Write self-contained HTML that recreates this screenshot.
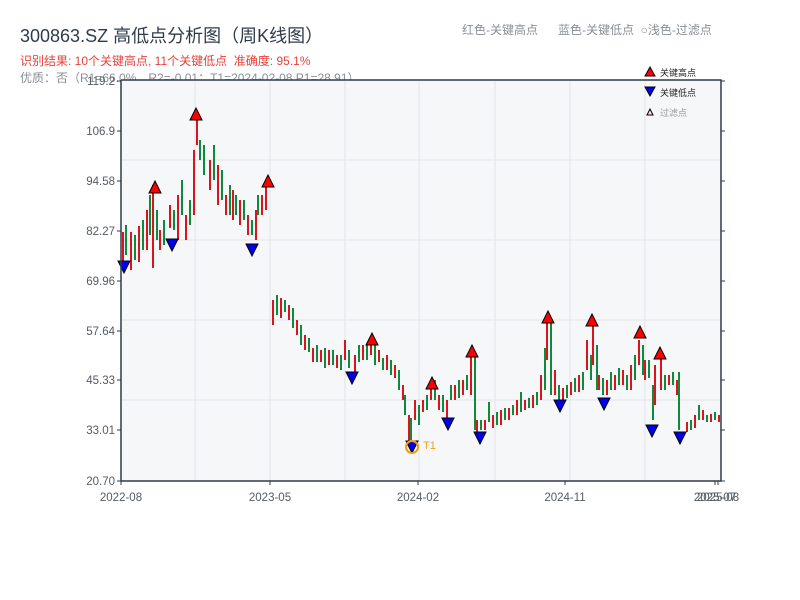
<!DOCTYPE html>
<html><head><meta charset="utf-8"><style>
body{margin:0;width:800px;height:600px;background:#fff;font-family:"Liberation Sans","Noto Sans CJK SC",sans-serif;overflow:hidden;position:relative}
.t{position:absolute;white-space:nowrap}
svg text{font-family:"Liberation Sans","Noto Sans CJK SC",sans-serif}
</style></head><body>
<div class="t" style="left:20px;top:22px;font-size:18px;color:#2f3b4a">300863.SZ 高低点分析图（周K线图）</div>
<div class="t" style="left:20px;top:52px;font-size:12px;color:#e8413a">识别结果: 10个关键高点, 11个关键低点&nbsp;&nbsp;准确度: 95.1%</div>
<div class="t" style="left:20px;top:69px;font-size:12px;color:#8a8f96">优质：否（R1=66.0%，R2=-0.01；T1=2024-02-08 P1=28.91）</div>
<div class="t" style="left:462px;top:21px;font-size:12px;color:#8a8f96">红色-关键高点&nbsp;&nbsp;&nbsp;&nbsp;&nbsp;&nbsp;蓝色-关键低点&nbsp;&nbsp;○浅色-过滤点</div>
<svg width="800" height="600" style="position:absolute;left:0;top:0">
<rect x="121" y="80" width="600" height="401" fill="#f6f7f9"/>
<g stroke="#e1e3e7">
<path d="M121 160H721M121 240H721M121 320H721M121 400H721M195 80V481M270 80V481M345 80V481M419 80V481M495 80V481M570 80V481M645 80V481"/>
</g>
<path stroke="#d9141c" stroke-width="2" fill="none" d="M123 232V262 M131 232V270 M139 226V262 M147 210V250 M153 185V268 M160 230V250 M170 205V228 M178 195V240 M186 215V240 M194 150V215 M197 120V145 M210 160V190 M218 165V205 M226 195V215 M233 190V220 M240 200V225 M248 215V235 M256 210V240 M262 195V215 M266 185V210 M273 300V325 M281 298V318 M289 305V320 M297 320V335 M305 335V350 M313 348V362 M321 350V362 M329 350V365 M337 355V368 M345 340V360 M355 355V372 M363 345V360 M371 338V355 M379 350V362 M387 355V370 M395 365V378 M403 385V400 M409 415V445 M415 400V420 M423 400V412 M431 385V400 M439 395V410 M447 400V420 M455 385V400 M463 380V395 M471 350V395 M477 420V432 M485 420V430 M493 415V428 M501 410V425 M509 408V420 M517 400V415 M525 400V410 M533 395V408 M541 375V400 M547 322V360 M555 370V395 M563 388V400 M571 382V395 M579 375V392 M587 340V370 M593 325V365 M599 375V390 M607 380V395 M615 375V390 M623 370V385 M631 365V390 M639 340V365 M645 360V380 M655 365V405 M661 358V390 M669 375V385 M677 380V395 M687 422V432 M695 415V428 M703 410V420 M711 414V422 M719 415V422"/>
<path stroke="#0f8a3c" stroke-width="2" fill="none" d="M126 225V255 M135 235V260 M143 220V250 M150 195V235 M157 210V240 M164 220V245 M174 210V230 M182 180V215 M190 200V225 M200 140V160 M204 145V175 M214 145V180 M222 170V200 M230 185V215 M236 195V215 M244 200V220 M252 220V235 M258 195V215 M277 295V315 M285 300V312 M293 308V328 M301 325V345 M309 338V352 M317 345V362 M325 348V368 M333 350V365 M341 355V370 M349 350V368 M359 345V362 M367 345V360 M375 345V365 M383 358V370 M391 360V375 M399 370V390 M405 395V415 M411 418V440 M419 405V425 M427 395V410 M435 380V400 M443 395V412 M451 385V400 M459 380V398 M467 375V390 M475 355V430 M481 420V430 M489 402V422 M497 412V425 M505 408V420 M513 405V415 M521 392V412 M529 398V408 M537 392V405 M545 348V390 M551 318V395 M559 385V400 M567 385V398 M575 378V392 M583 372V390 M591 355V380 M597 345V390 M603 378V395 M611 372V390 M619 368V385 M627 375V390 M635 355V380 M643 345V375 M649 360V378 M653 385V420 M665 375V390 M673 372V385 M679 372V430 M691 420V430 M699 405V420 M707 415V422 M715 412V420"/>
<g fill="#f00" stroke="#000">
<polygon points="149,193 161,193 155,181"/><polygon points="190,120 202,120 196,108"/><polygon points="262,187 274,187 268,175"/><polygon points="366,345 378,345 372,333"/><polygon points="426,389 438,389 432,377"/><polygon points="466,357 478,357 472,345"/><polygon points="542,323 554,323 548,311"/><polygon points="586,326 598,326 592,314"/><polygon points="634,338 646,338 640,326"/><polygon points="654,359 666,359 660,347"/>
</g>
<g fill="#0000f0" stroke="#000">
<polygon points="118,261 130,261 124,273"/><polygon points="166,239 178,239 172,251"/><polygon points="246,244 258,244 252,256"/><polygon points="346,372 358,372 352,384"/><polygon points="406,441 418,441 412,453"/><polygon points="442,418 454,418 448,430"/><polygon points="474,432 486,432 480,444"/><polygon points="554,400 566,400 560,412"/><polygon points="598,398 610,398 604,410"/><polygon points="646,425 658,425 652,437"/><polygon points="674,432 686,432 680,444"/>
</g>
<circle cx="412" cy="447" r="6" fill="none" stroke="#f39c12" stroke-width="2"/>
<text x="423" y="449" font-size="11" fill="#f39c12">T1</text>
<path d="M121 80V481H721V80H121" fill="none" stroke="#2f3b4a" stroke-width="1.5"/>
<path stroke="#2f3b4a" d="M117 81H121M117 131H121M117 181H121M117 231H121M117 281H121M117 331H121M117 380H121M117 430H121M117 481H121M721 81H725M721 131H725M721 181H725M721 231H725M721 281H725M721 331H725M721 380H725M721 430H725M721 481H725M121 481V485M270 481V485M418 481V485M565 481V485M715 481V485M718 481V485"/>
<g font-size="11.5" fill="#555b63" text-anchor="end">
<text x="115" y="85">119.2</text><text x="115" y="135">106.9</text><text x="115" y="185">94.58</text><text x="115" y="235">82.27</text><text x="115" y="285">69.96</text><text x="115" y="335">57.64</text><text x="115" y="384">45.33</text><text x="115" y="434">33.01</text><text x="115" y="485">20.70</text>
</g>
<g font-size="11.5" fill="#555b63" text-anchor="middle">
<text x="121" y="501">2022-08</text><text x="270" y="501">2023-05</text><text x="418" y="501">2024-02</text><text x="565" y="501">2024-11</text><text x="715" y="501">2025-07</text><text x="718" y="501">2025-08</text>
</g>
<polygon points="645,76 655,76 650,67" fill="#f00" stroke="#000"/><text x="660" y="76" font-size="9" fill="#222">关键高点</text>
<polygon points="645,87 655,87 650,96" fill="#0000f0" stroke="#000"/><text x="660" y="96" font-size="9" fill="#222">关键低点</text>
<polygon points="647,115 653,115 650,109" fill="#fdd" stroke="#000"/><text x="660" y="116" font-size="9" fill="#999">过滤点</text>
</svg>
</body></html>
